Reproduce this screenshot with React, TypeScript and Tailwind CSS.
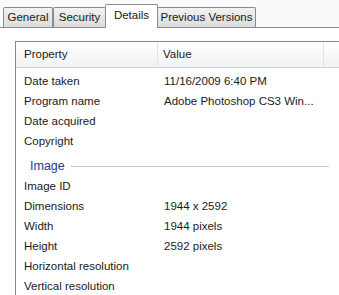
const rows1: [string, string][] = [
  ["Date taken", "11/16/2009 6:40 PM"],
  ["Program name", "Adobe Photoshop CS3 Win..."],
  ["Date acquired", ""],
  ["Copyright", ""],
];

const rows2: [string, string][] = [
  ["Image ID", ""],
  ["Dimensions", "1944 x 2592"],
  ["Width", "1944 pixels"],
  ["Height", "2592 pixels"],
  ["Horizontal resolution", ""],
  ["Vertical resolution", ""],
];

function Tab({ label, width, active }: { label: string; width: string; active?: boolean }) {
  if (active) {
    return (
      <div
        className={`${width} h-[24px] -mb-px -mx-[1px] z-10 bg-white border border-b-0 border-[#898c95] rounded-t-[2px] flex items-center justify-center pb-[2px]`}
      >
        {label}
      </div>
    );
  }
  return (
    <div
      className={`${width} h-[20px] bg-gradient-to-b from-[#f2f2f2] to-[#dcdcdc] border border-b-0 border-[#898c95] rounded-t-[2px] flex items-center justify-center`}
    >
      {label}
    </div>
  );
}

function Row({ name, value }: { name: string; value: string }) {
  return (
    <div className="h-[20px] flex items-center">
      <div className="w-[142px] pl-[8px] whitespace-nowrap">{name}</div>
      <div className="pl-[6px] whitespace-nowrap">{value}</div>
    </div>
  );
}

export default function App() {
  return (
    <div
      className="w-[339px] h-[295px] overflow-hidden bg-white text-[11.5px] text-[#1a1a1a] leading-none"
      style={{ fontFamily: '"Segoe UI", "Liberation Sans", Arial, sans-serif' }}
    >
      {/* Tab strip */}
      <div className="h-[28px] flex items-end pl-[3px] border-b border-[#898c95] bg-[#fafafa]">
        <Tab label="General" width="w-[50px]" />
        <Tab label="Security" width="w-[53px]" />
        <Tab label="Details" width="w-[53px]" active />
        <Tab label="Previous Versions" width="w-[99px]" />
      </div>

      {/* Details page */}
      <div className="pl-[15px] pt-[13px]">
        <div className="border-l border-t border-[#828790] w-[340px]">
          <div className="h-[26px] flex items-center bg-gradient-to-b from-[#ffffff] to-[#f1f2f4] border-b border-[#d5d5d5]">
            <div className="w-[142px] h-full flex items-center pl-[8px] border-r border-[#e3e3e3]">Property</div>
            <div className="w-[166px] h-full flex items-center pl-[5px] border-r border-[#e3e3e3]">Value</div>
          </div>
          <div className="pt-[4px]">
            {rows1.map(([n, v]) => (
              <Row key={n} name={n} value={v} />
            ))}
            <div className="h-[25px] flex items-center pl-[14px] pt-[3px]">
              <span className="text-[#1e3a8a] text-[12.5px]">Image</span>
              <div className="ml-[6px] w-[258px] h-px bg-[#c8cdd6]" />
            </div>
            {rows2.map(([n, v]) => (
              <Row key={n} name={n} value={v} />
            ))}
          </div>
        </div>
      </div>
    </div>
  );
}
